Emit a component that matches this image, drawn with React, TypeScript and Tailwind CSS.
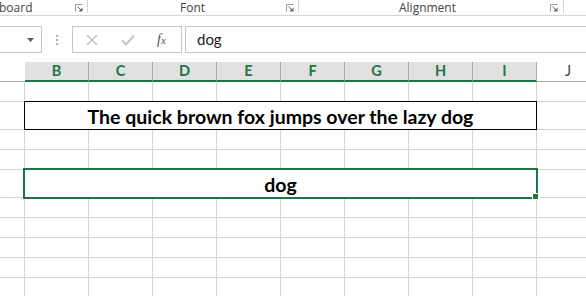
import React from "react";

const Launcher = () => (
  <svg width="8" height="8" viewBox="0 0 8 8" className="shrink-0">
    <path d="M0.5 7.5 V0.5 H7.5" stroke="#9a9a9a" strokeWidth="1" fill="none" />
    <path d="M2.5 2.5 L6 6" stroke="#666" strokeWidth="1" />
    <polygon points="3.5,7.5 7.5,7.5 7.5,3.5" fill="#666" />
  </svg>
);

const cols = ["B", "C", "D", "E", "F", "G", "H", "I"];

function GridRow({ h }: { h: string }) {
  return (
    <div className={`flex ${h}`}>
      <div className="w-[25px] shrink-0 border-r border-b border-[#d4d4d4]" />
      {cols.map((c) => (
        <div key={c} className="w-[64px] shrink-0 border-r border-b border-[#d4d4d4]" />
      ))}
      <div className="flex-1 border-b border-[#d4d4d4]" />
    </div>
  );
}

export default function App() {
  return (
    <div className="w-[586px] h-[296px] overflow-hidden bg-white font-['Lato',sans-serif] select-none">
      {/* Ribbon group labels */}
      <div className="flex h-[16px] border-b border-[#d5d5d5] font-['Open_Sans',sans-serif] text-[12px] leading-[15px] text-[#444]">
        <div className="w-[93px] shrink-0 flex items-start pr-[5px]">
          <span className="ml-[-1px] flex-1">board</span>
          <div className="mt-[4px]"><Launcher /></div>
          <div className="w-px h-[13px] bg-[#d5d5d5] ml-[4px]" />
        </div>
        <div className="w-[206px] shrink-0 flex items-start">
          <span className="flex-1 text-center pl-[6px]">Font</span>
          <div className="mt-[4px]"><Launcher /></div>
          <div className="w-px h-[13px] bg-[#d5d5d5] ml-[4px]" />
        </div>
        <div className="w-[265px] shrink-0 flex items-start">
          <span className="flex-1 text-center pl-[6px]">Alignment</span>
          <div className="mt-[4px]"><Launcher /></div>
          <div className="w-px h-[13px] bg-[#d5d5d5] ml-[5px]" />
        </div>
        <div className="flex-1" />
      </div>

      {/* Formula bar */}
      <div className="flex h-[27px] mt-[10px]">
        <div className="w-[42px] shrink-0 border-y border-r border-[#c6c6c6] flex items-center justify-end pr-[7px]">
          <svg width="7" height="4" viewBox="0 0 7 4"><polygon points="0,0 7,0 3.5,4" fill="#5a5a5a" /></svg>
        </div>
        <div className="w-[30px] shrink-0 flex flex-col items-center justify-center gap-[2px]">
          <div className="w-[2px] h-[2px] bg-[#b0b0b0]" />
          <div className="w-[2px] h-[2px] bg-[#b0b0b0]" />
          <div className="w-[2px] h-[2px] bg-[#b0b0b0]" />
        </div>
        <div className="w-[110px] shrink-0 border border-[#c6c6c6] flex items-center">
          <svg width="12" height="12" viewBox="0 0 12 12" className="ml-[13px]">
            <path d="M1 1 L11 11 M11 1 L1 11" stroke="#c4c4c4" strokeWidth="1.5" />
          </svg>
          <svg width="14" height="12" viewBox="0 0 14 12" className="ml-[23px]">
            <path d="M1 6.5 L5 10.5 L13 1.5" stroke="#c4c4c4" strokeWidth="2" fill="none" />
          </svg>
          <span className="ml-[22px] font-['Liberation_Serif',serif] italic text-[14px] leading-none text-[#555]">
            f<span className="text-[11px]">x</span>
          </span>
        </div>
        <div className="w-[3px] shrink-0" />
        <div className="flex-1 border-y border-l border-[#c6c6c6] flex items-center pl-[11px] text-[15px] text-[#222]">
          dog
        </div>
      </div>

      {/* Column headers */}
      <div className="flex h-[20px] mt-[9px] text-[14.5px]">
        <div className="w-[25px] shrink-0 border-b border-[#ababab]" />
        {cols.map((c) => (
          <div
            key={c}
            className="w-[64px] shrink-0 bg-[#e1e1e1] border-r border-[#ababab] border-b-2 border-b-[#217346] flex items-center justify-center font-bold text-[#217346] leading-none"
          >
            {c}
          </div>
        ))}
        <div className="flex-1 border-b border-[#ababab] flex items-center pl-[28px] text-[#444] leading-none">
          J
        </div>
      </div>

      {/* Row 1 */}
      <GridRow h="h-[20px]" />

      {/* Row 2 merged */}
      <div className="flex h-[28px]">
        <div className="w-[25px] shrink-0 border-r border-b border-[#d4d4d4]" />
        <div className="w-[513px] h-[29px] shrink-0 ml-[-1px] mt-[-1px] border border-black flex items-center justify-center pt-[2px] font-bold text-[19.5px] leading-none text-black">
          The quick brown fox jumps over the lazy dog
        </div>
        <div className="flex-1 border-b border-[#d4d4d4]" />
      </div>

      <GridRow h="h-[20px]" />
      <GridRow h="h-[20px]" />

      {/* Row 5 merged + selection */}
      <div className="flex h-[28px] relative">
        <div className="w-[25px] shrink-0 border-r border-b border-[#d4d4d4]" />
        <div className="w-[512px] shrink-0 border-r border-b border-[#d4d4d4] flex items-center justify-center pt-[2px] font-bold text-[19.5px] leading-none text-black">
          dog
        </div>
        <div className="flex-1 border-b border-[#d4d4d4]" />
        <div className="absolute left-[23px] top-[-2px] w-[515px] h-[31px] border-2 border-[#217346]" />
        <div className="absolute left-[532px] top-[23px] w-[7px] h-[7px] bg-[#217346] border border-white" />
      </div>

      <GridRow h="h-[20px]" />
      <GridRow h="h-[20px]" />
      <GridRow h="h-[20px]" />
      <GridRow h="h-[20px]" />
      <GridRow h="h-[20px]" />
    </div>
  );
}
